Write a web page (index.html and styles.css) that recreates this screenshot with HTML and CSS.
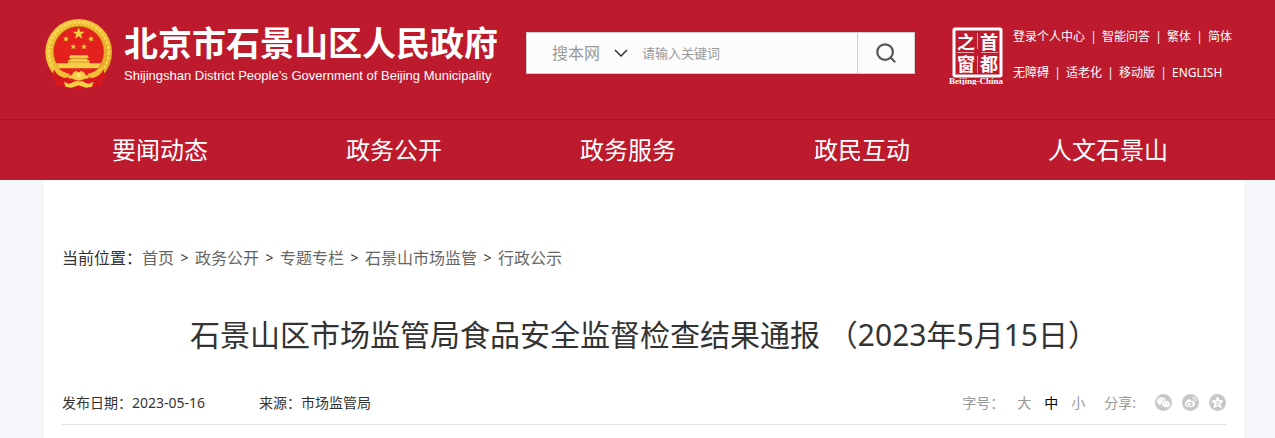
FILE: index.html
```
<!DOCTYPE html>
<html lang="zh-CN">
<head>
  <meta charset="UTF-8" />
  <meta name="viewport" content="width=device-width, initial-scale=1.0"/>
  <title>石景山区市场监管局食品安全监督检查结果通报</title>
  <link rel="stylesheet" href="styles.css">
</head>
<body>
  <header class="header">
    <div class="top">
      <a class="brand" href="#">
        <svg class="emblem" viewBox="0 0 204 216" aria-hidden="true">
          <defs>
            <linearGradient id="gold" x1="0" y1="0" x2="1" y2="1">
              <stop offset="0" stop-color="#f5cb3c"/>
              <stop offset=".5" stop-color="#f0bd33"/>
              <stop offset="1" stop-color="#e2a422"/>
            </linearGradient>
            <polygon id="star" points="0,-10 2.4,-3.1 9.5,-3.1 3.8,1.2 5.9,8.1 0,4 -5.9,8.1 -3.8,1.2 -9.5,-3.1 -2.4,-3.1"/>
          </defs>
          <ellipse cx="101" cy="103" rx="100" ry="100" fill="url(#gold)"/>
          <circle cx="101" cy="102" r="90" fill="none" stroke="#f7d65c" stroke-width="7" stroke-dasharray="9 5"/>
          <circle cx="101" cy="102" r="82" fill="none" stroke="#dd9f22" stroke-width="3" stroke-dasharray="5 7"/>
          <circle cx="101" cy="101" r="76" fill="#e5211d" stroke="#c98a1b" stroke-width="2"/>
          <g fill="#f6cf48">
            <use href="#star" transform="translate(101 47) scale(1.9)"/>
            <use href="#star" transform="translate(63 63) rotate(15) scale(.95)"/>
            <use href="#star" transform="translate(138 63) rotate(-15) scale(.95)"/>
            <use href="#star" transform="translate(85 86) scale(.95)"/>
            <use href="#star" transform="translate(117 86) scale(.95)"/>
            <path d="M76 112 H127 L132 120 H71Z M76 121 H127 V127 H133 V136 H168 L158 153 H44 L34 136 H69 V127 H76Z"/>
          </g>
          <path stroke="#d27a1a" stroke-width="2" d="M75 121 H128 M70 132 H133"/>
          <path fill="#e5211d" d="M40 151 H162 C150 169 130 174 101 175 C72 174 52 169 40 151Z"/>
          <path fill="#f2bf34" d="M24 146 L40 150 C50 160 60 165 74 168 L68 186 C48 184 32 168 24 146Z M178 146 L162 150 C152 160 142 165 128 168 L134 186 C154 184 170 168 178 146Z"/>
          <path fill="#da171b" d="M27 154 C34 169 44 177 60 180 C82 176 120 176 142 180 C158 177 168 169 175 154 L180 176 170 188 173 206 157 200 146 208 131 200 114 190 H88 L71 200 56 208 45 200 29 206 32 188 22 176Z"/>
          <path fill="#f5cb41" stroke="#c98220" stroke-width="1" d="M84 164 L94 158 98 162 104 162 108 158 118 164 121 171 134 174 129 182 C118 180 114 188 101 188 C88 188 84 180 73 182 L68 174 81 171Z"/>
          <circle cx="101" cy="171" r="6" fill="#fae58b"/>
          <path fill="#f6d044" d="M57 191 L70 197 C82 196 90 192 101 192 C112 192 120 196 132 197 L145 191 141 206 124 209 101 203 78 209 61 206Z"/>
          <path fill="#da171b" d="M82 210 L101 202 120 210 101 215Z"/>
          <path fill="none" stroke="#a90e15" stroke-width="2" d="M33 174 L52 192 M169 174 L150 192"/>
        </svg>
        <span class="brand-text">
          <span class="brand-cn">北京市石景山区人民政府</span>
          <span class="brand-en">Shijingshan District People’s Government of Beijing Municipality</span>
        </span>
      </a>

      <form class="search" role="search">
        <select class="search-scope" aria-label="搜索范围">
          <option>搜本网</option>
        </select>
        <svg class="chevron" viewBox="0 0 14 8" aria-hidden="true"><path d="M1 1l6 6 6-6"/></svg>
        <input class="search-input" type="text" placeholder="请输入关键词" aria-label="请输入关键词">
        <button class="search-btn" type="submit" aria-label="搜索">
          <svg viewBox="0 0 24 24" aria-hidden="true"><circle cx="11" cy="11" r="8.5"/><path d="M17 17l5 5"/></svg>
        </button>
      </form>

      <div class="tools">
        <a class="seal" href="#" aria-label="首都之窗">
          <svg viewBox="0 0 56 58" aria-hidden="true">
            <rect x="6" y="2" width="47" height="47" rx="1"/>
            <path d="M29.500 6v16M29.500 29v17M9 25.500h17M33 25.500h17"/>
            <text x="18" y="22">之</text>
            <text x="41" y="22">首</text>
            <text x="18" y="44">窗</text>
            <text x="41" y="44">都</text>
            <text class="seal-en" x="28" y="57">Beijing-China</text>
          </svg>
        </a>
        <div class="links">
          <ul>
            <li><a href="#">登录个人中心</a></li>
            <li><a href="#">智能问答</a></li>
            <li><a href="#">繁体</a></li>
            <li><a href="#">简体</a></li>
          </ul>
          <ul>
            <li><a href="#">无障碍</a></li>
            <li><a href="#">适老化</a></li>
            <li><a href="#">移动版</a></li>
            <li><a href="#">ENGLISH</a></li>
          </ul>
        </div>
      </div>
    </div>

    <nav class="nav">
      <a href="#">要闻动态</a>
      <a href="#">政务公开</a>
      <a href="#">政务服务</a>
      <a href="#">政民互动</a>
      <a href="#">人文石景山</a>
    </nav>
  </header>

  <main class="main">
    <article class="panel">
      <div class="crumbs">
        <span>当前位置：</span>
        <ol>
          <li><a href="#">首页</a></li>
          <li><a href="#">政务公开</a></li>
          <li><a href="#">专题专栏</a></li>
          <li><a href="#">石景山市场监管</a></li>
          <li><a href="#">行政公示</a></li>
        </ol>
      </div>

      <h1>石景山区市场监管局食品安全监督检查结果通报 （2023年5月15日）</h1>

      <div class="meta">
        <span>发布日期：2023-05-16</span>
        <span>来源：市场监管局</span>
        <div class="meta-right">
          <div class="sizes">
            <span>字号：</span>
            <button type="button">大</button>
            <button type="button" class="active">中</button>
            <button type="button">小</button>
          </div>
          <span>分享:</span>
          <div class="share">
            <a href="#" aria-label="微信">
              <svg viewBox="0 0 17 17">
                <circle cx="8.500" cy="8.500" r="8.500" fill="#c8c8c8"/>
                <path fill="#fff" d="M6.500 3.300C4 3.300 2 4.900 2 7c0 1.200.6 2.100 1.600 2.800L3.200 11.200l1.600-.8 1.700.2C6.200 8.200 8.200 6.400 11 6.500 10.600 4.600 8.700 3.300 6.500 3.300Z"/>
                <path fill="#fff" d="M11.200 7.100c-2.300 0-4 1.400-4 3.100s1.700 3.100 4 3.100l1.200-.2 1.400.8-.4-1.300c1-.6 1.700-1.400 1.700-2.400 0-1.700-1.700-3.100-3.900-3.100Z"/>
                <g fill="#c8c8c8"><circle cx="5" cy="5.900" r=".7"/><circle cx="8" cy="5.900" r=".7"/><circle cx="9.900" cy="9.300" r=".6"/><circle cx="12.600" cy="9.300" r=".6"/></g>
              </svg>
            </a>
            <a href="#" aria-label="微博">
              <svg viewBox="0 0 17 17">
                <circle cx="8.500" cy="8.500" r="8.500" fill="#c8c8c8"/>
                <path fill="#fff" d="M7.500 5.200C5.500 5.400 3 7.900 3 10c0 2 2.200 3.300 4.800 3.300 3 0 5.300-1.700 5.300-3.500 0-1-.8-1.600-1.800-1.800.4-1.300-.6-1.800-2.600-1.100.3-1.100-.1-1.800-1.200-1.700Z"/>
                <ellipse cx="7.700" cy="10.200" rx="3.200" ry="2.200" fill="#c8c8c8" transform="rotate(-8 7.700 10.200)"/>
                <circle cx="7.200" cy="10.400" r="1.400" fill="#fff"/>
                <path fill="none" stroke="#fff" d="M10.500 3.200c2.600-.5 4.500 1.600 3.800 4M10.700 5.200c1.300-.2 2 .7 1.700 1.800"/>
              </svg>
            </a>
            <a href="#" aria-label="QQ空间">
              <svg viewBox="0 0 17 17">
                <circle cx="8.500" cy="8.500" r="8.500" fill="#c8c8c8"/>
                <path fill="#fff" stroke="#fff" stroke-linejoin="round" d="M8.500 3l1.600 3.500 3.900.5-2.900 2.600.8 3.900-3.400-1.900-3.400 1.900.8-3.900L3 7l3.900-.5Z"/>
                <path fill="none" stroke="#c8c8c8" stroke-width=".8" d="M6.500 7.600h3.900L7.200 10.200h3.900"/>
              </svg>
            </a>
          </div>
        </div>
      </div>
    </article>
  </main>
</body>
</html>
```
FILE: styles.css
```
* {
  box-sizing: border-box;
}
body {
  margin: 0;
  font-family: "Noto Sans", "Noto Sans CJK SC", sans-serif;
  font-size: 14px;
  color: #333;
  background: #f4f6f9;
}
a {
  color: inherit;
  text-decoration: none;
}
ul, ol {
  margin: 0;
  padding: 0;
  list-style: none;
  display: flex;
}
svg {
  display: block;
}
button {
  padding: 0;
  border: 0;
  background: none;
  font: inherit;
  color: inherit;
  cursor: pointer;
}

/* header */
.header {
  background: #bd1a2d;
  color: #fff;
}
.top {
  display: flex;
  align-items: flex-start;
  height: 120px;
  padding: 18px 43px 0 45px;
  border-bottom: 1px solid #a01325;
}
.brand {
  display: flex;
  gap: 11px;
}
.emblem {
  width: 68px;
  height: 72px;
}
.brand-text {
  display: flex;
  flex-direction: column;
  padding-top: 4px;
  white-space: nowrap;
}
.brand-cn {
  font-size: 34px;
  font-weight: bold;
  line-height: 42px;
}
.brand-en {
  font-family: "Liberation Sans", Arial, sans-serif;
  font-size: 13px;
  line-height: 24px;
}
.search {
  display: flex;
  align-items: center;
  flex: 0 1 389px;
  height: 42px;
  margin: 14px 0 0 28px;
  border: 1px solid #ccc;
  background: #fcfcfc;
}
.search-scope {
  appearance: none;
  width: 62px;
  margin-left: 25px;
  padding: 0;
  border: 0;
  background: none;
  font: inherit;
  font-size: 16px;
  color: #999;
}
.chevron {
  width: 14px;
  height: 8px;
  fill: none;
  stroke: #333;
  stroke-width: 1.5;
}
.search-input {
  flex: 1;
  min-width: 0;
  padding: 0 14px;
  border: 0;
  background: none;
  font: inherit;
  font-size: 13px;
  color: #333;
}
.search-input::placeholder {
  color: #999;
}
.search-btn {
  display: flex;
  align-items: center;
  justify-content: center;
  width: 57px;
  height: 100%;
  border-left: 1px solid #ccc;
}
.search-btn svg {
  width: 22px;
  height: 22px;
  fill: none;
  stroke: #555;
  stroke-width: 2.4;
}
.tools {
  display: flex;
  gap: 9px;
  margin-left: auto;
  padding-top: 9px;
}
.seal svg {
  width: 56px;
  height: 58px;
  fill: none;
  stroke: #fff;
  stroke-width: 3;
}
.seal path {
  stroke: #e3a0a8;
  stroke-width: 1;
}
.seal text {
  fill: #fff;
  stroke: none;
  font-size: 18px;
  font-weight: bold;
  text-anchor: middle;
}
.seal .seal-en {
  font-family: "Liberation Serif", serif;
  font-size: 9px;
}
.links {
  display: flex;
  flex-direction: column;
  gap: 16px;
  font-size: 12px;
  line-height: 20px;
  white-space: nowrap;
}
.links li {
  display: flex;
}
.links li + li::before {
  content: "|";
  width: 17px;
  text-align: center;
}
.nav {
  display: flex;
  justify-content: space-between;
  padding: 0 107px 0 112px;
  font-size: 24px;
  line-height: 60px;
}

/* article */
.main {
  padding: 0 31px 0 44px;
}
.panel {
  min-height: calc(100vh - 180px);
  padding: 66px 18px 0;
  background: #fff;
}
.crumbs {
  display: flex;
  font-size: 16px;
  line-height: 24px;
}
.crumbs li {
  display: flex;
  color: #666;
}
.crumbs li + li::before {
  content: ">";
  width: 21px;
  font-size: 14px;
  text-align: center;
  color: #333;
}
h1 {
  margin: 45px 0 25px;
  font-size: 30px;
  font-weight: normal;
  line-height: 40px;
  text-align: center;
}
.meta {
  display: flex;
  align-items: center;
  gap: 54px;
  height: 45px;
  border-bottom: 1px solid #e1e1e1;
}
.meta-right {
  display: flex;
  align-items: center;
  gap: 19px;
  margin-left: auto;
  color: #999;
}
.sizes {
  display: flex;
  gap: 13px;
}
.sizes .active {
  color: #000;
}
.share {
  display: flex;
  gap: 10px;
}
.share svg {
  width: 17px;
  height: 17px;
}
```
